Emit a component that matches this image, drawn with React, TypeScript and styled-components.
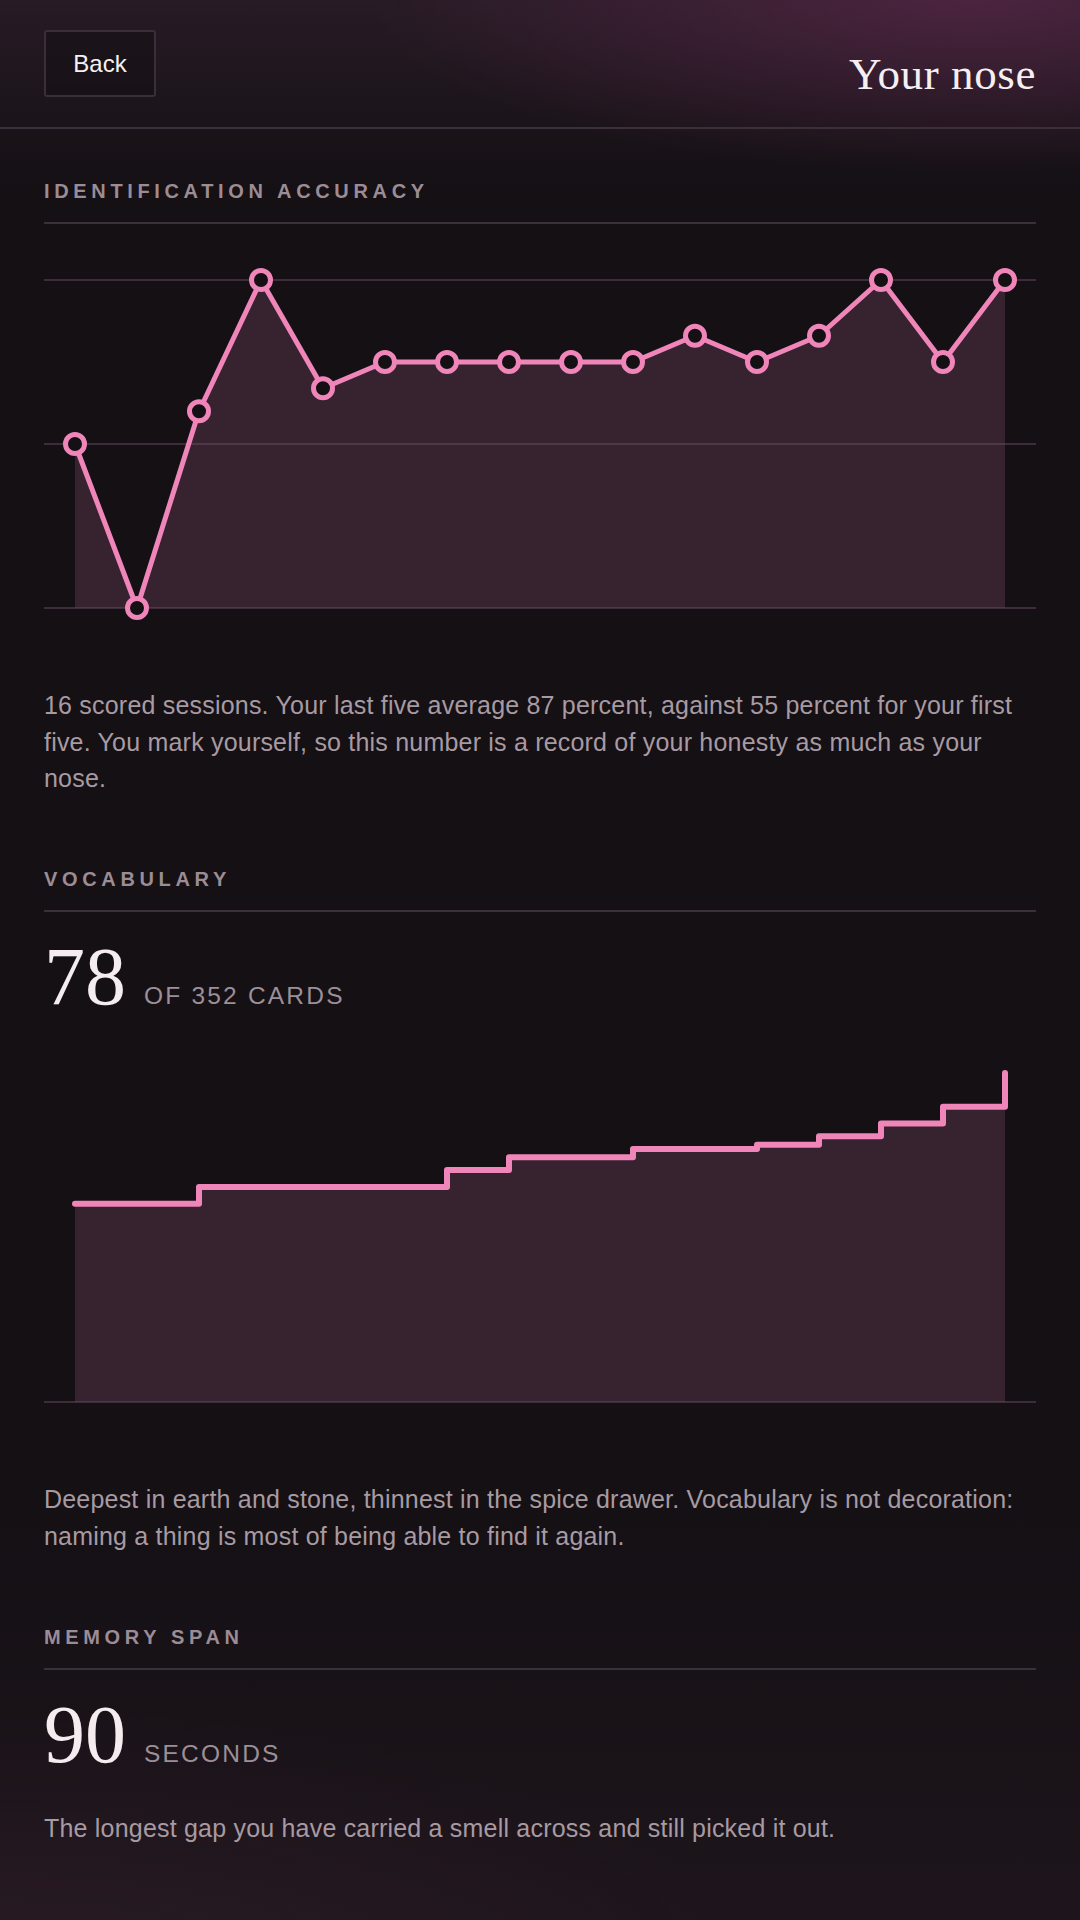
import React from 'react'
import styled, { createGlobalStyle } from 'styled-components'

const GlobalStyle = createGlobalStyle`
    html, body {
        margin: 0;
        padding: 0;
        background: #141014;
    }
    * {
        box-sizing: border-box;
    }
`

const PINK = '#f085b9'
const FILL = '#37232f'
const GRID = 'rgba(110, 80, 105, 0.45)'
const BG = '#141014'

const Page = styled.div`
    min-height: 100vh;
    font-family: "Liberation Sans", Arial, sans-serif;
    color: #f3ebee;
    background:
        radial-gradient(800px 230px at 90% 0%, rgba(120, 48, 96, 0.45), transparent 75%),
        radial-gradient(1100px 420px at 0% 100%, rgba(70, 40, 60, 0.32), transparent 70%),
        linear-gradient(180deg, #271b25 0px, #141014 190px, #141014 1500px, #1d151b 1920px);
    overflow: hidden;
`

const Header = styled.header`
    height: 129px;
    padding: 30px 44px 0;
    display: flex;
    justify-content: space-between;
    align-items: flex-start;
    border-bottom: 2px solid #3b2f39;
`

const BackButton = styled.button`
    width: 112px;
    height: 67px;
    border: 2px solid #3a2f38;
    border-radius: 3px;
    background: rgba(20, 16, 20, 0.55);
    color: #f6f0f3;
    font-family: "Liberation Sans", Arial, sans-serif;
    font-size: 24px;
    cursor: pointer;
`

const Title = styled.h1`
    margin: 22px 0 0;
    font-family: "Liberation Serif", "Times New Roman", serif;
    font-weight: 400;
    font-size: 45px;
    line-height: 1;
    letter-spacing: 0.6px;
    color: #f6eff2;
`

const Main = styled.main`
    padding: 0 44px 40px;
`

const Section = styled.section<{ first?: boolean }>`
    margin-top: ${props => (props.first ? '50px' : '70px')};
`

const SectionLabel = styled.h2`
    margin: 0;
    padding-bottom: 19px;
    border-bottom: 2px solid #3b2f39;
    font-size: 20px;
    line-height: 24px;
    font-weight: 700;
    letter-spacing: 4.65px;
    text-transform: uppercase;
    color: #9c8c96;
`

const Chart = styled.svg<{ gap?: number }>`
    display: block;
    width: 100%;
    margin-top: ${props => props.gap || 0}px;
`

const Note = styled.p<{ gap: number }>`
    margin: ${props => props.gap}px 0 0;
    font-size: 25px;
    line-height: 36.7px;
    letter-spacing: 0.2px;
    color: #a89aa2;
`

const FigureRow = styled.div`
    margin-top: 24px;
    display: flex;
    align-items: baseline;
    gap: 18px;
`

const BigNumber = styled.span`
    font-family: "Liberation Serif", "Times New Roman", serif;
    font-size: 82px;
    line-height: 1;
    color: #f4ecef;
`

const Unit = styled.span`
    font-size: 24.5px;
    letter-spacing: 2.2px;
    text-transform: uppercase;
    color: #9d8e98;
`

const accuracy = [50, 0, 60, 100, 67, 75, 75, 75, 75, 75, 83, 75, 83, 100, 75, 100]
const vocabulary = [47, 47, 51, 51, 51, 51, 55, 58, 58, 60, 60, 61, 63, 66, 70, 78]

const xAt = (i: number) => 31 + i * 62

function AccuracyChart() {
    const top = 56
    const bottom = 384
    const pts = accuracy.map((v, i) => [xAt(i), bottom - (v / 100) * (bottom - top)])
    const line = pts.map(([x, y], i) => `${i === 0 ? 'M' : 'L'}${x},${y}`).join(' ')
    const area = `${line} L${xAt(accuracy.length - 1)},${bottom} L${xAt(0)},${bottom} Z`

    return <Chart viewBox="0 0 992 400" height={400}>
        <path d={area} fill={FILL} />
        {[top, (top + bottom) / 2, bottom].map(y =>
            <line key={y} x1={0} x2={992} y1={y} y2={y} stroke={GRID} strokeWidth={2} />)}
        <path d={line} fill="none" stroke={PINK} strokeWidth={5} strokeLinejoin="round" />
        {pts.map(([x, y], i) =>
            <circle key={i} cx={x} cy={y} r={9.5} fill={BG} stroke={PINK} strokeWidth={5} />)}
    </Chart>
}

function VocabularyChart() {
    const base = 362
    const k = 4.218
    const ys = vocabulary.map(v => base - v * k)
    let line = `M${xAt(0)},${ys[0]}`
    for (let i = 1; i < ys.length; i++) {
        line += ` H${xAt(i)} V${ys[i]}`
    }
    const area = `${line} V${base} H${xAt(0)} Z`

    return <Chart viewBox="0 0 992 380" height={380} gap={22}>
        <path d={area} fill={FILL} />
        <line x1={0} x2={992} y1={base} y2={base} stroke={GRID} strokeWidth={2} />
        <path d={line} fill="none" stroke={PINK} strokeWidth={6} strokeLinejoin="round" strokeLinecap="round" />
    </Chart>
}

export default function App() {
    return <>
        <GlobalStyle />
        <Page>
            <Header>
                <BackButton>Back</BackButton>
                <Title>Your nose</Title>
            </Header>
            <Main>
                <Section first>
                    <SectionLabel>Identification accuracy</SectionLabel>
                    <AccuracyChart />
                    <Note gap={63}>
                        16 scored sessions. Your last five average 87 percent, against 55 percent for your first
                        five. You mark yourself, so this number is a record of your honesty as much as your nose.
                    </Note>
                </Section>

                <Section>
                    <SectionLabel>Vocabulary</SectionLabel>
                    <FigureRow>
                        <BigNumber>78</BigNumber>
                        <Unit>of 352 cards</Unit>
                    </FigureRow>
                    <VocabularyChart />
                    <Note gap={61}>
                        Deepest in earth and stone, thinnest in the spice drawer. Vocabulary is not decoration:
                        naming a thing is most of being able to find it again.
                    </Note>
                </Section>

                <Section>
                    <SectionLabel>Memory span</SectionLabel>
                    <FigureRow>
                        <BigNumber>90</BigNumber>
                        <Unit>seconds</Unit>
                    </FigureRow>
                    <Note gap={34}>
                        The longest gap you have carried a smell across and still picked it out.
                    </Note>
                </Section>

                <Section>
                    <SectionLabel>By shelf</SectionLabel>
                </Section>
            </Main>
        </Page>
    </>
}
